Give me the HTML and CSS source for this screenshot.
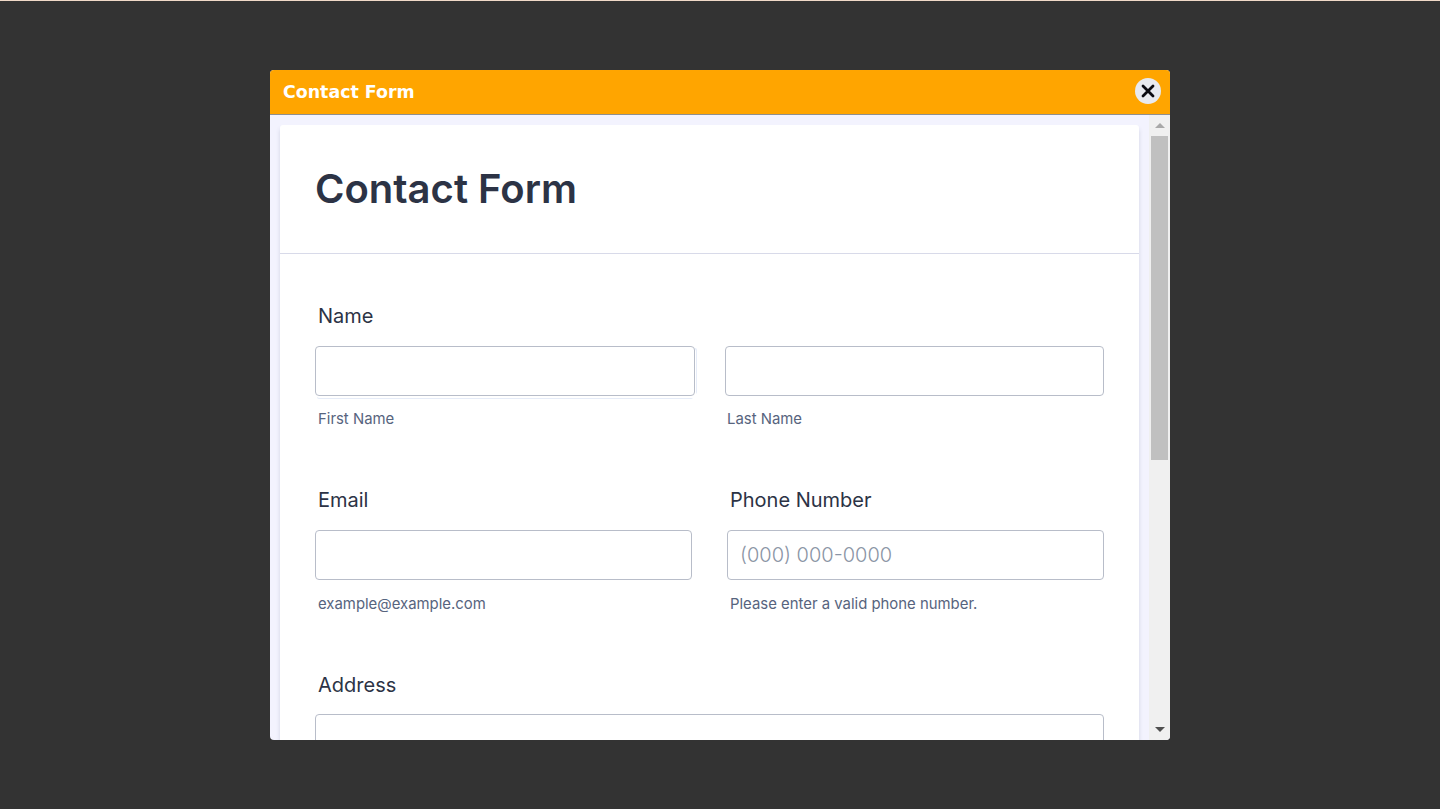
FILE: index.html
```html
<!DOCTYPE html>
<html lang="en">
<head>
    <meta charset="UTF-8">
    <meta name="viewport" content="width=device-width, initial-scale=1.0">
    <title>Contact Form</title>
    <link rel="stylesheet" href="styles.css">
</head>
<body>
    <div class="overlay">
        <div class="modal">
            <!-- Orange title bar -->
            <div class="modal-header">
                <span class="modal-title">Contact Form</span>
                <button type="button" class="close-button" aria-label="Close">
                    <svg width="14" height="14" viewBox="0 0 14 14">
                        <path d="M2 2 12 12M12 2 2 12" stroke="#0b0b12" stroke-width="2.8" stroke-linecap="round" fill="none"/>
                    </svg>
                </button>
            </div>

            <div class="modal-body">
                <div class="form-view">
                    <form class="form-card">
                        <div class="form-heading">
                            <h1>Contact Form</h1>
                        </div>

                        <div class="form-fields">
                            <div class="field-group">
                                <label class="field-label" for="firstName">Name</label>
                                <div class="field-row name-row">
                                    <div class="field">
                                        <input class="text-input first-name" type="text" id="firstName">
                                        <span class="sublabel">First Name</span>
                                    </div>
                                    <div class="field last-name">
                                        <input class="text-input" type="text" id="lastName">
                                        <span class="sublabel">Last Name</span>
                                    </div>
                                </div>
                            </div>

                            <div class="field-row contact-row">
                                <div class="field">
                                    <label class="field-label" for="email">Email</label>
                                    <input class="text-input" type="email" id="email">
                                    <span class="sublabel">example@example.com</span>
                                </div>
                                <div class="field">
                                    <label class="field-label" for="phone">Phone Number</label>
                                    <input class="text-input" type="tel" id="phone" placeholder="(000) 000-0000">
                                    <span class="sublabel">Please enter a valid phone number.</span>
                                </div>
                            </div>

                            <div class="field-group">
                                <label class="field-label address-label" for="address">Address</label>
                                <input class="text-input" type="text" id="address">
                            </div>
                        </div>
                    </form>
                </div>

                <!-- Scrollbar -->
                <div class="scrollbar">
                    <div class="scroll-arrow arrow-up"></div>
                    <div class="scroll-track">
                        <div class="scroll-thumb"></div>
                    </div>
                    <div class="scroll-arrow arrow-down"></div>
                </div>
            </div>
        </div>
    </div>
</body>
</html>
```

FILE: styles.css
```css
html, body {
    margin: 0;
    padding: 0;
    height: 100%;
    overflow: hidden;
}

body {
    background-color: #333333;
    font-family: "Inter", "Liberation Sans", sans-serif;
}

.overlay {
    box-sizing: border-box;
    height: 809px;
    border-top: 1px solid #f0d9c8;
    display: flex;
    align-items: center;
    justify-content: center;
}

.modal {
    width: 900px;
    height: 670px;
    border-radius: 4px;
    overflow: hidden;
    display: flex;
    flex-direction: column;
    background-color: #f3f3fe;
}

/* Title bar */
.modal-header {
    box-sizing: border-box;
    flex: none;
    height: 45px;
    padding: 0 9px 0 13px;
    display: flex;
    justify-content: space-between;
    align-items: center;
    background-color: #ffa500;
    border-bottom: 1px solid #8f8f8f;
}

.modal-title {
    color: #ffffff;
    font-family: "DejaVu Sans", sans-serif;
    font-weight: bold;
    font-size: 17.4px;
}

.close-button {
    width: 26px;
    height: 26px;
    margin-bottom: 2px;
    padding: 0;
    border: none;
    border-radius: 50%;
    background-color: #e8eaf0;
    display: flex;
    align-items: center;
    justify-content: center;
    cursor: pointer;
}

.modal-body {
    flex: 1;
    min-height: 0;
    display: flex;
}

.form-view {
    flex: 1;
    min-width: 0;
    overflow: hidden;
    padding: 10px 10px 0 10px;
}

/* White form card */
.form-card {
    display: block;
    background-color: #ffffff;
    border-radius: 3px 3px 0 0;
    box-shadow: 0 4px 4px rgba(87, 100, 126, 0.21);
}

.form-heading {
    box-sizing: border-box;
    height: 129px;
    padding: 0 35px 2px;
    display: flex;
    align-items: center;
    border-bottom: 1px solid #d8dae9;
}

h1 {
    margin: 0;
    color: #2c3345;
    font-size: 40px;
    font-weight: 600;
}

.form-fields {
    padding: 48px 35px 40px 35px;
    display: flex;
    flex-direction: column;
    gap: 58px;
}

.field-group {
    display: flex;
    flex-direction: column;
}

.field-row {
    display: grid;
    grid-template-columns: 1fr 1fr;
}

.name-row {
    grid-template-columns: 380px 379px;
    gap: 30px;
}

.contact-row {
    grid-template-columns: 377px 377px;
    gap: 35px;
}

.field {
    display: flex;
    flex-direction: column;
    min-width: 0;
}

.field-label {
    padding-left: 3px;
    margin-bottom: 14px;
    height: 30px;
    line-height: 28px;
    color: #2c3345;
    font-size: 20px;
    font-weight: 430;
}

.address-label {
    line-height: 30px;
}

.text-input {
    box-sizing: border-box;
    width: 100%;
    height: 50px;
    padding: 0 12px;
    background-color: #ffffff;
    border: 1px solid #b8bdc9;
    border-radius: 4px;
    color: #2c3345;
    font-family: "Inter", "Liberation Sans", sans-serif;
    font-size: 20px;
    font-weight: 300;
}

.text-input::placeholder {
    color: #8b95a5;
}

/* Pale ring left on the first field */
.first-name {
    box-shadow: 1px 2px 0 0 #ffffff, 4px 0 0 -2px #e6ecf8, 0 5px 0 -2px #e6ecf8;
}

.sublabel {
    padding-left: 3px;
    margin-top: 14px;
    height: 18px;
    line-height: 18px;
    color: #57647e;
    font-size: 14.9px;
}

.last-name .sublabel {
    padding-left: 2px;
}

.contact-row .sublabel {
    margin-top: 15px;
    height: 17px;
}

/* Scrollbar */
.scrollbar {
    flex: none;
    box-sizing: border-box;
    width: 21px;
    display: flex;
    flex-direction: column;
    background-color: #f0f0f0;
}

.scroll-arrow {
    flex: none;
    height: 21px;
    display: flex;
    align-items: center;
    justify-content: center;
}

.scroll-arrow::before {
    content: "";
    border-left: 5px solid transparent;
    border-right: 5px solid transparent;
}

.arrow-up::before {
    border-bottom: 5px solid #a8a8a8;
}

.arrow-down::before {
    border-top: 5px solid #505050;
}

.scroll-track {
    flex: 1;
    padding: 0 2px;
}

.scroll-thumb {
    height: 324px;
    background-color: #c0c0c0;
}
```
